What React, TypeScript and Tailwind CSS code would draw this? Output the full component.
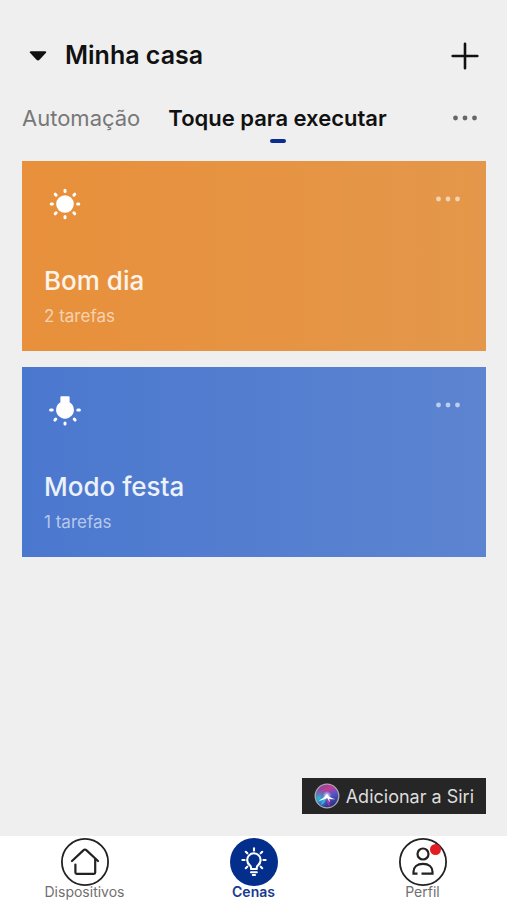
import React, { useState, ReactNode } from 'react';
import classNames from 'clsx';

interface Scene {
  id: string;
  name: string;
  tasks: number;
  icon: ReactNode;
  className: string;
}

interface NavItem {
  id: string;
  label: string;
  icon: ReactNode;
  badge?: boolean;
}

const SunIcon = () => (
  <svg viewBox="0 0 42 42" className="size-[42px]" fill="white" stroke="white" strokeWidth="3" strokeLinecap="round">
    <circle cx="21" cy="21" r="8.8" stroke="none" />
    <path d="M21 7.2v1.2M21 33.6v1.2M7.2 21h1.2M33.6 21h1.2M11.2 11.2l.9.9M29.9 29.9l.9.9M11.2 30.8l.9-.9M29.9 12.1l.9-.9" />
  </svg>
);

const BulbIcon = () => (
  <svg viewBox="0 0 42 42" className="size-[42px]" fill="white" stroke="white" strokeWidth="3" strokeLinecap="round">
    <path
      d="M17.3 7.2h7.4c.6 0 .9.3.9.9v5.1a8.9 8.9 0 1 1-9.2 0V8.1c0-.6.3-.9.9-.9z"
      stroke="none"
    />
    <path d="M6.6 21h1.6M33.8 21h1.6M21 34v1M10.9 31.1l.9-1M31.1 31.1l-.9-1" />
  </svg>
);

const DotsIcon = () => (
  <svg viewBox="0 0 26 6" className="w-[26px]" fill="currentColor">
    <circle cx="3.5" cy="3" r="2.4" />
    <circle cx="13" cy="3" r="2.4" />
    <circle cx="22.5" cy="3" r="2.4" />
  </svg>
);

const SiriIcon = () => (
  <svg viewBox="0 0 26 26" className="size-[26px]">
    <defs>
      <linearGradient id="siri-base" x1="0.2" y1="0" x2="0.7" y2="1">
        <stop offset="0" stopColor="#8a3f9c" />
        <stop offset="0.3" stopColor="#c93a94" />
        <stop offset="0.55" stopColor="#5a55c8" />
        <stop offset="1" stopColor="#232c78" />
      </linearGradient>
      <radialGradient id="siri-cyan" cx="0.15" cy="0.6" r="0.5">
        <stop offset="0" stopColor="#27c4cf" />
        <stop offset="1" stopColor="#2a62c4" stopOpacity="0" />
      </radialGradient>
      <radialGradient id="siri-glow" cx="0.5" cy="0.5" r="0.5">
        <stop offset="0" stopColor="#ffffff" />
        <stop offset="1" stopColor="#9fe3ff" stopOpacity="0" />
      </radialGradient>
    </defs>
    <circle cx="13" cy="13" r="11.6" fill="url(#siri-base)" />
    <circle cx="13" cy="13" r="11.6" fill="url(#siri-cyan)" />
    <path d="M13 12.5c1.6 3 3 6.4 2.6 11.2-2.6-2-3.4-6-2.6-11.2z" fill="#b32fa4" />
    <path d="M12.6 12.5c-.4 4-1.8 8-5.6 9.6 1-4 2.6-7.2 5.6-9.6z" fill="#2fb6e0" />
    <circle cx="13" cy="12.6" r="4.6" fill="url(#siri-glow)" />
    <path
      d="M4.5 17.6c3-1.2 5.6-3 8.3-6.4 2.4 2.8 5.2 4.4 8.6 5-3.6.5-6.2-.2-8.4-1.3-2.3 1.4-5.2 2.5-8.5 2.7z"
      fill="white"
    />
    <path d="M12.8 10.8c1.6 2.6 2.8 5 3 8.6-1.8-2.2-2.8-5-3-8.6z" fill="white" />
    <circle cx="13" cy="13" r="11.8" fill="none" stroke="#a9a9b5" strokeWidth="1.3" />
  </svg>
);

const HomeIcon = () => (
  <svg viewBox="0 0 48 48" className="size-12" fill="none" stroke="#222222" strokeWidth="2.2" strokeLinecap="round" strokeLinejoin="round">
    <circle cx="24" cy="24" r="23.1" strokeWidth="1.8" />
    <path d="M11 23L22.6 12.1c.8-.8 1.9-.8 2.7 0L37 23" />
    <path d="M14.4 26.5v8c0 .9.4 1.3 1.3 1.3h17.2c.9 0 1.3-.4 1.3-1.3V21" />
  </svg>
);

const ScenesIcon = () => (
  <svg viewBox="0 0 48 48" className="size-12" fill="none" stroke="white" strokeWidth="2.1" strokeLinecap="round" strokeLinejoin="round">
    <circle cx="24" cy="24" r="24" fill="#032e8c" stroke="none" />
    <path d="M21 31v-1.5c0-1-.6-1.7-1.4-2.4a6.7 6.7 0 1 1 8.6 0c-.8.7-1.4 1.4-1.4 2.4V31z" />
    <path d="M21 34.2h5.8M22.8 37h2.2" />
    <path d="M24 10.2v2.4M12.4 22h2.2M33.4 22h2.2M15.8 13.8l1.5 1.5M32.2 13.8l-1.5 1.5M15.8 30.2l1.5-1.5M32.2 30.2l-1.5-1.5" />
  </svg>
);

const ProfileIcon = () => (
  <svg viewBox="0 0 48 48" className="size-12" fill="none" stroke="#222222" strokeWidth="2.2">
    <circle cx="24" cy="24" r="23.1" strokeWidth="1.8" />
    <circle cx="24" cy="16" r="5.5" />
    <path d="M18.5 35.6h-4v-1.8c0-4.8 3.6-8 9.5-8s9.5 3.2 9.5 8v1.8H22.5" />
  </svg>
);

const tabs = ['Automação', 'Toque para executar'];

const scenes: Scene[] = [
  { id: 'morning', name: 'Bom dia', tasks: 2, icon: <SunIcon />, className: 'from-[#e8903b] to-[#e4974a]' },
  { id: 'party', name: 'Modo festa', tasks: 1, icon: <BulbIcon />, className: 'from-[#4b78cf] to-[#5c84d0]' },
];

const navItems: NavItem[] = [
  { id: 'devices', label: 'Dispositivos', icon: <HomeIcon /> },
  { id: 'scenes', label: 'Cenas', icon: <ScenesIcon /> },
  { id: 'profile', label: 'Perfil', icon: <ProfileIcon />, badge: true },
];

const SceneCard: React.FC<{ scene: Scene }> = ({ scene }) => (
  <article className={classNames('bg-linear-to-r p-[22px]', scene.className)}>
    <div className="flex items-start justify-between">
      {scene.icon}
      <button type="button" aria-label={`Opções de ${scene.name}`} className="flex size-8 items-center justify-center text-white/60">
        <DotsIcon />
      </button>
    </div>
    <h2 className="mt-[38px] text-[26px] leading-9 font-medium text-white/90">{scene.name}</h2>
    <p className="mt-1 text-[17px] leading-[26px] text-white/60">{scene.tasks} tarefas</p>
  </article>
);

export default function App() {
  const [activeTab, setActiveTab] = useState(tabs[1]);
  const [activeNav, setActiveNav] = useState('scenes');

  return (
    <div className="flex min-h-screen flex-col bg-[#efefef] font-['Inter','Liberation_Sans',sans-serif] text-[#111111]">
      <header className="flex items-center justify-between px-[22px] pt-9">
        <button type="button" className="flex h-10 items-center gap-[18px] pl-[7px] text-[25px] font-semibold">
          <svg viewBox="0 0 18 10" className="w-[18px]" fill="currentColor">
            <path d="M2 .3h14c1.3 0 1.7 1 .8 1.8l-6.3 6.6c-.9.9-2.1.9-3 0L1.2 2.1C.3 1.3.7.3 2 .3z" />
          </svg>
          Minha casa
        </button>
        <button type="button" aria-label="Adicionar" className="flex size-10 items-center justify-center">
          <svg viewBox="0 0 28 28" className="size-7" stroke="currentColor" strokeWidth="2.6" strokeLinecap="round">
            <path d="M14 1.7v24.6M1.7 14h24.6" />
          </svg>
        </button>
      </header>

      <div className="flex items-start justify-between px-[22px] pt-[22px]">
        <div role="tablist" className="flex gap-7">
          {tabs.map((tab) => (
            <button
              key={tab}
              type="button"
              role="tab"
              aria-selected={tab === activeTab}
              onClick={() => setActiveTab(tab)}
              className={classNames(
                'flex flex-col items-center text-[22px] leading-10',
                tab === activeTab ? 'font-semibold' : 'text-[#777777]'
              )}
            >
              {tab}
              {tab === activeTab && <span className="mt-px h-1 w-4 rounded-full bg-[#0b2d8f]" />}
            </button>
          ))}
        </div>
        <button type="button" aria-label="Mais opções" className="flex size-10 items-center justify-center text-[#666666]">
          <DotsIcon />
        </button>
      </div>

      <main className="flex flex-1 flex-col gap-4 pt-[18px] pr-[21px] pb-[22px] pl-[22px]">
        {scenes.map((scene) => (
          <SceneCard key={scene.id} scene={scene} />
        ))}
        <button type="button" className="mt-auto flex h-9 items-center gap-[6px] self-end bg-[#262626] px-3 text-[18px] text-[#dddddd]">
          <SiriIcon />
          Adicionar a Siri
        </button>
      </main>

      <nav className="flex h-16 bg-white pt-0.5">
        {navItems.map((item) => (
          <button
            key={item.id}
            type="button"
            onClick={() => setActiveNav(item.id)}
            className={classNames(
              'flex flex-1 flex-col items-center text-sm leading-3',
              item.id === activeNav ? 'font-semibold text-[#17398f]' : 'text-[#707070]'
            )}
          >
            <span className="relative">
              {item.icon}
              {item.badge && <span className="absolute top-1.5 right-1.5 size-[11px] rounded-full bg-[#e31b23]" />}
            </span>
            {item.label}
          </button>
        ))}
      </nav>
    </div>
  );
}
